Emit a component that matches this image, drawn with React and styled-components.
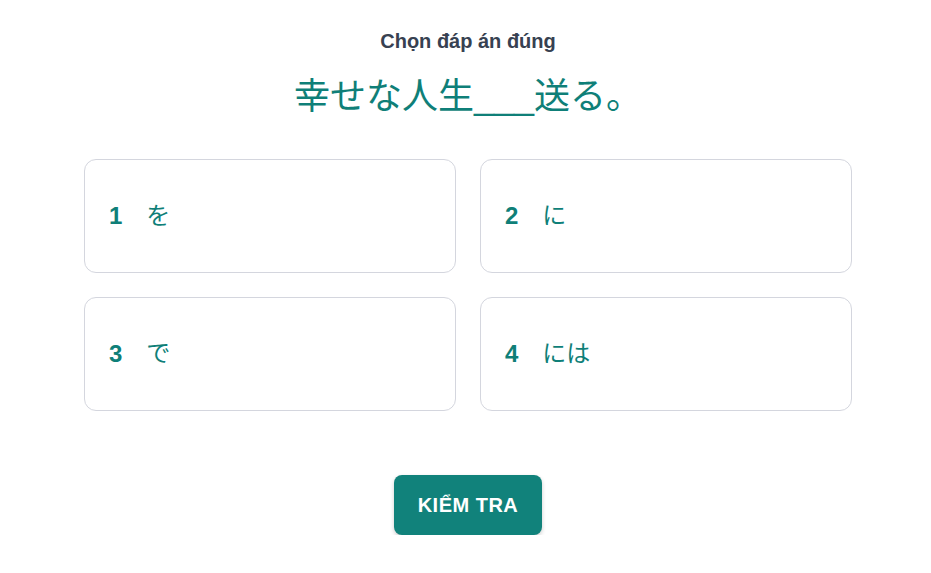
import React from 'react';
import styled, { createGlobalStyle } from 'styled-components';

const GlobalStyle = createGlobalStyle`
	body {
		margin: 0;
		background: #ffffff;
		font-family: "Liberation Sans", Arial, "Noto Sans CJK JP", sans-serif;
	}
`;

const Wrapper = styled.div`
	width: 768px;
	margin: 0 auto;
	padding: 27px 0 0 5px;
	display: flex;
	flex-direction: column;
	align-items: center;
`;

const Prompt = styled.h2`
	margin: 0;
	font-size: 20px;
	line-height: 28px;
	font-weight: 700;
	color: #374151;
`;

const Sentence = styled.p`
	margin: 22px 0 0;
	font-size: 36px;
	line-height: 40px;
	color: #0f7f78;
`;

const Options = styled.div`
	margin-top: 42px;
	width: 100%;
	display: grid;
	grid-template-columns: repeat(2, 1fr);
	gap: 24px;
`;

const Option = styled.button`
	height: 114px;
	display: flex;
	align-items: center;
	padding: 0 24px;
	background: #ffffff;
	border: 1px solid #d4d6de;
	border-radius: 12px;
	font-family: inherit;
	font-size: 24px;
	line-height: 32px;
	color: #0f7f78;
	cursor: pointer;
	text-align: left;
`;

const Number = styled.span`
	font-weight: 700;
	margin-right: 24px;
`;

const Answer = styled.span``;

const CheckButton = styled.button`
	margin-top: 64px;
	padding: 16px 24px;
	background: #11827b;
	color: #ffffff;
	border: none;
	border-radius: 8px;
	font-family: inherit;
	font-size: 20px;
	line-height: 28px;
	font-weight: 700;
	letter-spacing: 0.5px;
	box-shadow: 0 2px 4px rgba(0, 0, 0, 0.2);
	cursor: pointer;
`;

const answers = ['を', 'に', 'で', 'には'];

export default () => {
	return (
		<>
			<GlobalStyle />
			<Wrapper>
				<Prompt>Chọn đáp án đúng</Prompt>
				<Sentence>幸せな人生___送る。</Sentence>
				<Options>
					{answers.map((answer, i) => (
						<Option key={answer}>
							<Number>{i + 1}</Number>
							<Answer>{answer}</Answer>
						</Option>
					))}
				</Options>
				<CheckButton>KIỂM TRA</CheckButton>
			</Wrapper>
		</>
	);
};
